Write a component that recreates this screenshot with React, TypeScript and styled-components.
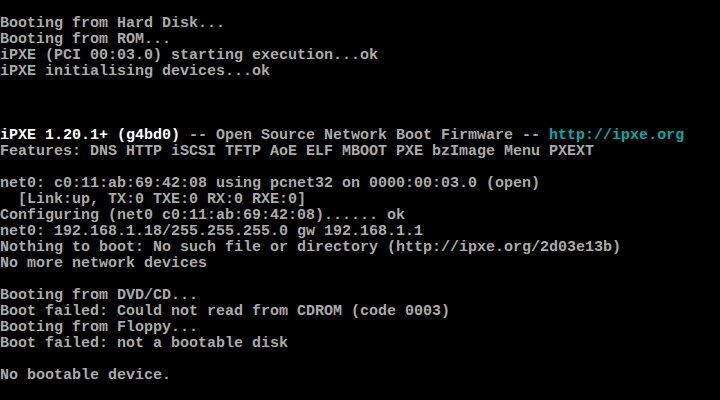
import React from "react";
import styled, { createGlobalStyle } from "styled-components";

const Global = createGlobalStyle`
  html, body {
    margin: 0;
    padding: 0;
    background: #000;
  }
`;

const Screen = styled.div`
  width: 720px;
  height: 400px;
  background: #000;
  color: #aaaaaa;
  font-family: "Liberation Mono", "DejaVu Sans Mono", monospace;
  font-size: 15px;
  font-weight: bold;
  display: flex;
  flex-direction: column;
  overflow: hidden;
`;

const Line = styled.div`
  height: 16px;
  line-height: 16px;
  white-space: pre;
  flex: none;
`;

const Bright = styled.span`
  color: #ffffff;
`;

const Link = styled.span`
  color: #00aaaa;
`;

const lines: React.ReactNode[] = [
  "",
  "Booting from Hard Disk...",
  "Booting from ROM...",
  "iPXE (PCI 00:03.0) starting execution...ok",
  "iPXE initialising devices...ok",
  "",
  "",
  "",
  <>
    <Bright>iPXE 1.20.1+ (g4bd0)</Bright> -- Open Source Network Boot Firmware --{" "}
    <Link>http://ipxe.org</Link>
  </>,
  "Features: DNS HTTP iSCSI TFTP AoE ELF MBOOT PXE bzImage Menu PXEXT",
  "",
  "net0: c0:11:ab:69:42:08 using pcnet32 on 0000:00:03.0 (open)",
  "  [Link:up, TX:0 TXE:0 RX:0 RXE:0]",
  "Configuring (net0 c0:11:ab:69:42:08)...... ok",
  "net0: 192.168.1.18/255.255.255.0 gw 192.168.1.1",
  "Nothing to boot: No such file or directory (http://ipxe.org/2d03e13b)",
  "No more network devices",
  "",
  "Booting from DVD/CD...",
  "Boot failed: Could not read from CDROM (code 0003)",
  "Booting from Floppy...",
  "Boot failed: not a bootable disk",
  "",
  "No bootable device.",
];

export default function App() {
  return (
    <>
      <Global />
      <Screen>
        {lines.map((l, i) => (
          <Line key={i}>{l}</Line>
        ))}
      </Screen>
    </>
  );
}
